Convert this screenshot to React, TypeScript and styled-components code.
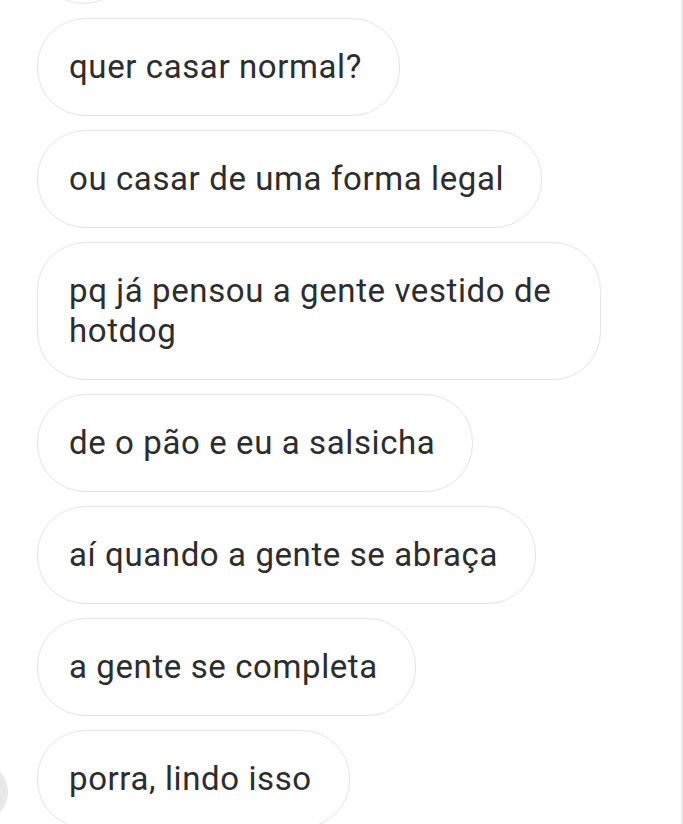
import React from 'react';
import styled, { createGlobalStyle } from 'styled-components';

const GlobalStyle = createGlobalStyle`
  html, body {
    margin: 0;
    padding: 0;
    background: #ffffff;
    overflow: hidden;
  }
`;

const Screen = styled.div`
  box-sizing: border-box;
  width: 683px;
  height: 824px;
  overflow: hidden;
  border-right: 2px solid #ececec;
  background: #ffffff;
  font-family: Roboto, "Liberation Sans", Arial, sans-serif;
`;

const Thread = styled.div`
  display: flex;
  flex-direction: column;
  align-items: flex-start;
  gap: 14px;
  padding: 0 0 0 37px;
`;

const Row = styled.div`
  display: flex;
  align-items: center;
`;

const Bubble = styled.div<{ $clipped?: boolean }>`
  box-sizing: border-box;
  max-width: 564px;
  padding: 28px 37px 28px 31px;
  border: 1.5px solid #e4e4e4;
  border-radius: 48px;
  color: #2d2d2d;
  font-size: 33px;
  line-height: 40px;
  letter-spacing: 0.6px;
  background: #ffffff;
  ${({ $clipped }) => $clipped && `
    width: 93px;
    height: 96px;
    margin-top: -92px;
  `}
`;

const Avatar = styled.div`
  flex: none;
  width: 62px;
  height: 62px;
  border-radius: 50%;
  background: #e9e9e9;
  margin-left: -91px;
  margin-right: 29px;
  margin-top: 26px;
`;

const messages = [
  'quer casar normal?',
  'ou casar de uma forma legal',
  'pq já pensou a gente vestido de hotdog',
  'de o pão e eu a salsicha',
  'aí quando a gente se abraça',
  'a gente se completa',
];

export default function App(): JSX.Element {
  return (
    <>
      <GlobalStyle />
      <Screen>
        <Thread>
          <Bubble $clipped />
          {messages.map((m) => (
            <Bubble key={m}>{m}</Bubble>
          ))}
          <Row>
            <Avatar />
            <Bubble>porra, lindo isso</Bubble>
          </Row>
        </Thread>
      </Screen>
    </>
  );
}
